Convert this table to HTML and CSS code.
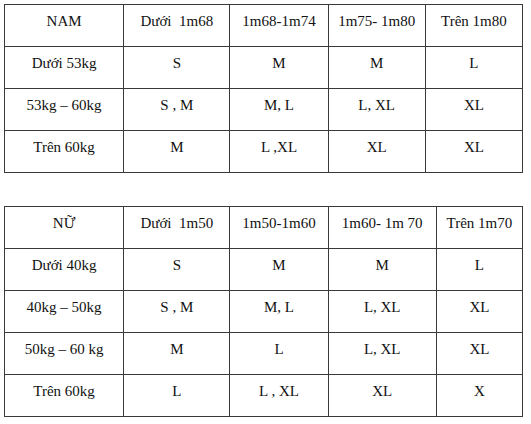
FILE: index.html
```html
<!DOCTYPE html>
<html lang="vi">
<head>
<meta charset="utf-8">
<title>Bảng size</title>
<link rel="stylesheet" href="styles.css">
</head>
<body>
<div class="page">
  <table class="size-table">
    <colgroup>
      <col class="c1"><col class="c2"><col class="c3"><col class="c4"><col class="c5">
    </colgroup>
    <tr><td>NAM</td><td>Dưới&nbsp; 1m68</td><td>1m68-1m74</td><td>1m75- 1m80</td><td>Trên 1m80</td></tr>
    <tr><td>Dưới 53kg</td><td>S</td><td>M</td><td>M</td><td>L</td></tr>
    <tr><td>53kg – 60kg</td><td>S , M</td><td>M, L</td><td>L, XL</td><td>XL</td></tr>
    <tr><td>Trên 60kg</td><td>M</td><td>L ,XL</td><td>XL</td><td>XL</td></tr>
  </table>

  <table class="size-table women">
    <colgroup>
      <col class="c1"><col class="c2"><col class="c3"><col class="c4"><col class="c5">
    </colgroup>
    <tr><td>NỮ</td><td>Dưới&nbsp; 1m50</td><td>1m50-1m60</td><td>1m60- 1m 70</td><td>Trên 1m70</td></tr>
    <tr><td>Dưới 40kg</td><td>S</td><td>M</td><td>M</td><td>L</td></tr>
    <tr><td>40kg – 50kg</td><td>S , M</td><td>M, L</td><td>L, XL</td><td>XL</td></tr>
    <tr><td>50kg – 60 kg</td><td>M</td><td>L</td><td>L, XL</td><td>XL</td></tr>
    <tr><td>Trên 60kg</td><td>L</td><td>L , XL</td><td>XL</td><td>X</td></tr>
  </table>
</div>
</body>
</html>
```

FILE: styles.css
```css
html, body {
  margin: 0;
  padding: 0;
  background: #ffffff;
}

.page {
  padding: 4px 0 0 4px;
  display: flex;
  flex-direction: column;
  align-items: flex-start;
  gap: 33px;
}

.size-table {
  border-collapse: collapse;
  table-layout: fixed;
  width: 519px;
  font-family: "Liberation Serif", "Times New Roman", serif;
  font-size: 15px;
  color: #111111;
}

.size-table td {
  border: 1px solid #3a3a3a;
  height: 41px;
  padding: 0 0 8px 0;
  line-height: 17px;
  text-align: center;
  vertical-align: middle;
  white-space: nowrap;
  box-sizing: border-box;
}

.size-table tr {
  height: 42px;
}

.c1 { width: 119px; }
.c2 { width: 106px; }
.c3 { width: 98px; }
.c4 { width: 97px; }
.c5 { width: 97px; }

.women .c4 { width: 108px; }
.women .c5 { width: 86px; }
```
